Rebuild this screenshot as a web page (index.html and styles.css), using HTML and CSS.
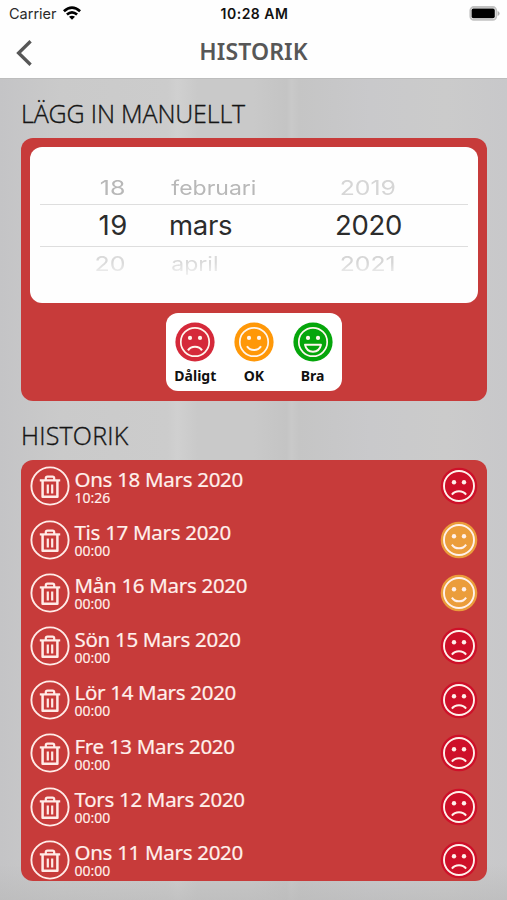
FILE: index.html
```
<!DOCTYPE html>
<html lang="sv">
<head>
<meta charset="utf-8">
<title>Historik</title>
<link rel="stylesheet" href="styles.css">
</head>
<body>
<svg class="symbols" width="0" height="0">
  <symbol id="trash" viewBox="0 0 40 40">
    <g fill="none" stroke="#ffebe7" stroke-width="1.9">
      <circle cx="20" cy="20" r="18.6"/>
      <path d="M9.8 14.4H30.2" stroke-width="2.2"/>
      <path d="M12.6 14.4V30.8H27.4V14.4" stroke-width="2.5" stroke-linejoin="round"/>
      <path d="M15.8 14V12.2Q15.8 10.6 17.4 10.6H22.6Q24.2 10.6 24.2 12.2V14M17.8 18.4V27.6M22.2 18.4V27.6" stroke-width="2.2"/>
    </g>
  </symbol>
  <symbol id="face" viewBox="0 0 40 40">
    <circle cx="20" cy="20" r="19.6" fill="currentColor"/>
    <circle cx="20" cy="20" r="14.2" fill="none" stroke="#fff6ee" stroke-width="1.7"/>
    <circle cx="15" cy="15.9" r="2.1" fill="#fff6ee"/>
    <circle cx="25" cy="15.9" r="2.1" fill="#fff6ee"/>
  </symbol>
  <symbol id="bad" viewBox="0 0 40 40">
    <use href="#face"/>
    <path d="M13 28.3C16.2 23.6 23.8 23.6 27 28.3" fill="none" stroke="#fff6ee" stroke-width="2.1"/>
  </symbol>
  <symbol id="ok" viewBox="0 0 40 40">
    <use href="#face"/>
    <path d="M13 24.2C16.2 29.2 23.8 29.2 27 24.2" fill="none" stroke="#fff6ee" stroke-width="2.1"/>
  </symbol>
  <symbol id="good" viewBox="0 0 40 40">
    <use href="#face"/>
    <path d="M12 22.8H28Q26.6 29.7 20 29.7T12 22.8Z" fill="none" stroke="#fff6ee" stroke-width="1.9" stroke-linejoin="round"/>
  </symbol>
  <symbol id="row-face" viewBox="0 0 38 38">
    <circle cx="19" cy="19" r="18.3" fill="currentColor"/>
    <circle cx="19" cy="19" r="15" fill="none" stroke="#fff1eb" stroke-width="1.9"/>
    <circle cx="14" cy="15.3" r="2.2" fill="#fff1eb"/>
    <circle cx="24" cy="15.3" r="2.2" fill="#fff1eb"/>
  </symbol>
  <symbol id="row-bad" viewBox="0 0 38 38">
    <use href="#row-face"/>
    <path d="M11.9 27.6C15.2 23.2 22.8 23.2 26.1 27.6" fill="none" stroke="#fff1eb" stroke-width="2"/>
  </symbol>
  <symbol id="row-ok" viewBox="0 0 38 38">
    <use href="#row-face"/>
    <path d="M11.9 23.6C15.2 28.6 22.8 28.6 26.1 23.6" fill="none" stroke="#fff1eb" stroke-width="2"/>
  </symbol>
</svg>

<header class="top">
  <div class="status">
    <div class="carrier"><span>Carrier</span>
      <svg width="18" height="14" viewBox="0 0 18 14"><g fill="none" stroke="#000" stroke-width="2.7"><path d="M.9 5.2Q9-2 17.1 5.2"/><path d="M3.9 8.5Q9 4.2 14.1 8.5"/></g><path d="M6 10.8Q9 8.6 12 10.8L9 13.8Z"/></svg>
    </div>
    <div class="clock">10:28 AM</div>
    <svg class="battery" width="31" height="15" viewBox="0 0 31 15"><rect x="1.3" y="1" width="26" height="12.8" rx="3.5" fill="#fff" stroke="#c2c2c2" stroke-width="1.8"/><rect x="2.6" y="2.6" width="23.2" height="9.6" rx="1.8"/><path d="M28.6 5Q30.6 5.8 30.6 7.5T28.6 10Z" fill="#b0b0b0"/></svg>
  </div>
  <nav class="nav">
    <svg class="back" width="16" height="26" viewBox="0 0 16 26"><path d="M14.6 1.3L2.6 13L14.6 24.7" fill="none" stroke="#575757" stroke-width="3.3"/></svg>
    <h1>HISTORIK</h1>
  </nav>
</header>

<main>
  <h2 class="add-title">LÄGG IN MANUELLT</h2>
  <section class="card add">
    <div class="picker">
      <div class="line prev"><span>18</span><span>februari</span><span>2019</span></div>
      <div class="line current"><span>19</span><span>mars</span><span>2020</span></div>
      <div class="line next"><span>20</span><span>april</span><span>2021</span></div>
    </div>
    <div class="moods">
      <div class="mood red"><svg><use href="#bad"/></svg><b>Dåligt</b></div>
      <div class="mood orange"><svg><use href="#ok"/></svg><b>OK</b></div>
      <div class="mood green"><svg><use href="#good"/></svg><b>Bra</b></div>
    </div>
  </section>

  <h2 class="log-title">HISTORIK</h2>
  <section class="card log">
    <div class="row"><svg class="bin"><use href="#trash"/></svg><div class="text"><span class="date">Ons 18 Mars 2020</span><span class="time">10:26</span></div><svg class="face bad"><use href="#row-bad"/></svg></div>
    <div class="row"><svg class="bin"><use href="#trash"/></svg><div class="text"><span class="date">Tis 17 Mars 2020</span><span class="time">00:00</span></div><svg class="face ok"><use href="#row-ok"/></svg></div>
    <div class="row"><svg class="bin"><use href="#trash"/></svg><div class="text"><span class="date">Mån 16 Mars 2020</span><span class="time">00:00</span></div><svg class="face ok"><use href="#row-ok"/></svg></div>
    <div class="row"><svg class="bin"><use href="#trash"/></svg><div class="text"><span class="date">Sön 15 Mars 2020</span><span class="time">00:00</span></div><svg class="face bad"><use href="#row-bad"/></svg></div>
    <div class="row"><svg class="bin"><use href="#trash"/></svg><div class="text"><span class="date">Lör 14 Mars 2020</span><span class="time">00:00</span></div><svg class="face bad"><use href="#row-bad"/></svg></div>
    <div class="row"><svg class="bin"><use href="#trash"/></svg><div class="text"><span class="date">Fre 13 Mars 2020</span><span class="time">00:00</span></div><svg class="face bad"><use href="#row-bad"/></svg></div>
    <div class="row"><svg class="bin"><use href="#trash"/></svg><div class="text"><span class="date">Tors 12 Mars 2020</span><span class="time">00:00</span></div><svg class="face bad"><use href="#row-bad"/></svg></div>
    <div class="row"><svg class="bin"><use href="#trash"/></svg><div class="text"><span class="date">Ons 11 Mars 2020</span><span class="time">00:00</span></div><svg class="face bad"><use href="#row-bad"/></svg></div>
  </section>
</main>
</body>
</html>
```

FILE: styles.css
```
* { box-sizing: border-box; }
body {
  margin: 0;
  height: 900px;
  overflow: hidden;
  font-family: "Noto Sans", "Open Sans", sans-serif;
  background:
    linear-gradient(180deg, transparent 0 96%, rgba(185,185,185,.6) 100%),
    linear-gradient(90deg, #c4c4c6 0%, #cacaca 12%, #cccccc 33%, #d0d0d0 35%, #c9c9c9 39%, #c9c9c9 50%, #c4c4c4 56.5%, #c9c9c9 57.5%, #c5c5c5 59%, #c9c9cb 73%, #cbcbcb 88%, #c8c8ca 100%);
}
.symbols { position: absolute; }
svg { display: block; flex: none; }
h1, h2 { margin: 0; }

.top {
  height: 79px;
  background: #fefefe;
  border-bottom: 1px solid #bdbdbd;
  font-family: Inter, sans-serif;
}
.status {
  height: 27px;
  padding: 0 7px 0 9px;
  display: grid;
  grid-template-columns: 1fr auto 1fr;
  align-items: center;
}
.carrier { display: flex; align-items: center; gap: 6px; font-size: 14.5px; color: #2a2a2a; }
.carrier svg { margin-top: -2px; }
.clock { font-size: 14px; font-weight: 600; color: #111; letter-spacing: .5px; }
.battery { justify-self: end; }
.nav {
  height: 51px;
  padding: 0 16px;
  display: grid;
  grid-template-columns: 16px 1fr 16px;
  align-items: center;
}
.nav h1 {
  text-align: center;
  font: 600 23px/30px "Noto Sans", sans-serif;
  letter-spacing: .1px;
  color: #575757;
  margin-top: -4px;
}

main { padding: 0 20px 0 21px; }
h2 {
  height: 58.5px;
  padding-top: 17px;
  font: 300 25px/34px "Open Sans", sans-serif;
  color: #151515;
  white-space: nowrap;
  -webkit-text-stroke: .35px #151515;
}
.add-title { letter-spacing: -.15px; }
.log-title { letter-spacing: .2px; }
.card { background: #c73b3a; border-radius: 12px; }
.add {
  height: 263.5px;
  padding: 9.5px 9px 0;
  display: flex;
  flex-direction: column;
  align-items: center;
  gap: 10px;
}
.picker {
  width: 448px;
  height: 156px;
  padding: 16px 10px 0;
  border-radius: 12px;
  background: #fefefe;
  font-family: Inter, sans-serif;
}
.line {
  display: grid;
  grid-template-columns: 88px 126px 150px;
  column-gap: 41px;
  align-items: center;
}
.line span:first-child { text-align: right; }
.prev, .next { font-size: 20px; color: #b8b8b8; }
.prev span, .next span { transform: scaleX(1.15); transform-origin: 0 50%; padding-left: 2px; }
.prev span:first-child, .next span:first-child { transform: scaleX(1.25); transform-origin: 100% 50%; padding: 0 2px 0 0; }
.prev span:last-child, .next span:last-child { color: #d6d6d6; transform: scaleX(1.24); padding-left: 3px; }
.prev { height: 41px; padding-top: 8px; }
.next {
  height: 34px;
  color: #dadada;
  mask-image: linear-gradient(#000 45%, rgba(0,0,0,.35) 85%);
}
.current {
  height: 43px;
  padding-bottom: 2px;
  border: solid #dedede;
  border-width: 1px 0;
  font-size: 27.5px;
  letter-spacing: -.3px;
  color: #2c2c2c;
}
.current span:first-child { letter-spacing: .6px; }
.current span:last-child { margin-left: -1px; }
.moods {
  width: 176px;
  height: 78px;
  padding-top: 9px;
  border-radius: 12px;
  background: #fff;
  display: grid;
  grid-template-columns: repeat(3, 1fr);
}
.mood { display: flex; flex-direction: column; align-items: center; }
.mood svg { width: 40px; height: 40px; }
.mood b { font: 700 14px/18px "Noto Sans", sans-serif; color: #111; margin-top: 5px; }
.red svg { color: #d5293a; }
.orange svg { color: #ff9808; }
.green svg { color: #05a60b; }

.log { height: 421px; overflow: hidden; }
.row {
  height: 53.4px;
  padding: 0 9px;
  display: flex;
  align-items: center;
  color: #fff0ec;
}
.bin { width: 40px; height: 40px; }
.text { flex: 1; padding-left: 4.5px; display: flex; flex-direction: column; white-space: nowrap; }
.date { font-size: 20.5px; line-height: 22px; letter-spacing: -.3px; -webkit-text-stroke: .2px; }
.time { font-size: 14px; line-height: 15px; -webkit-text-stroke: .15px; }
.face { width: 38px; height: 38px; }
.face.bad { color: #ce1029; }
.face.ok { color: #eb9d3b; }
```
